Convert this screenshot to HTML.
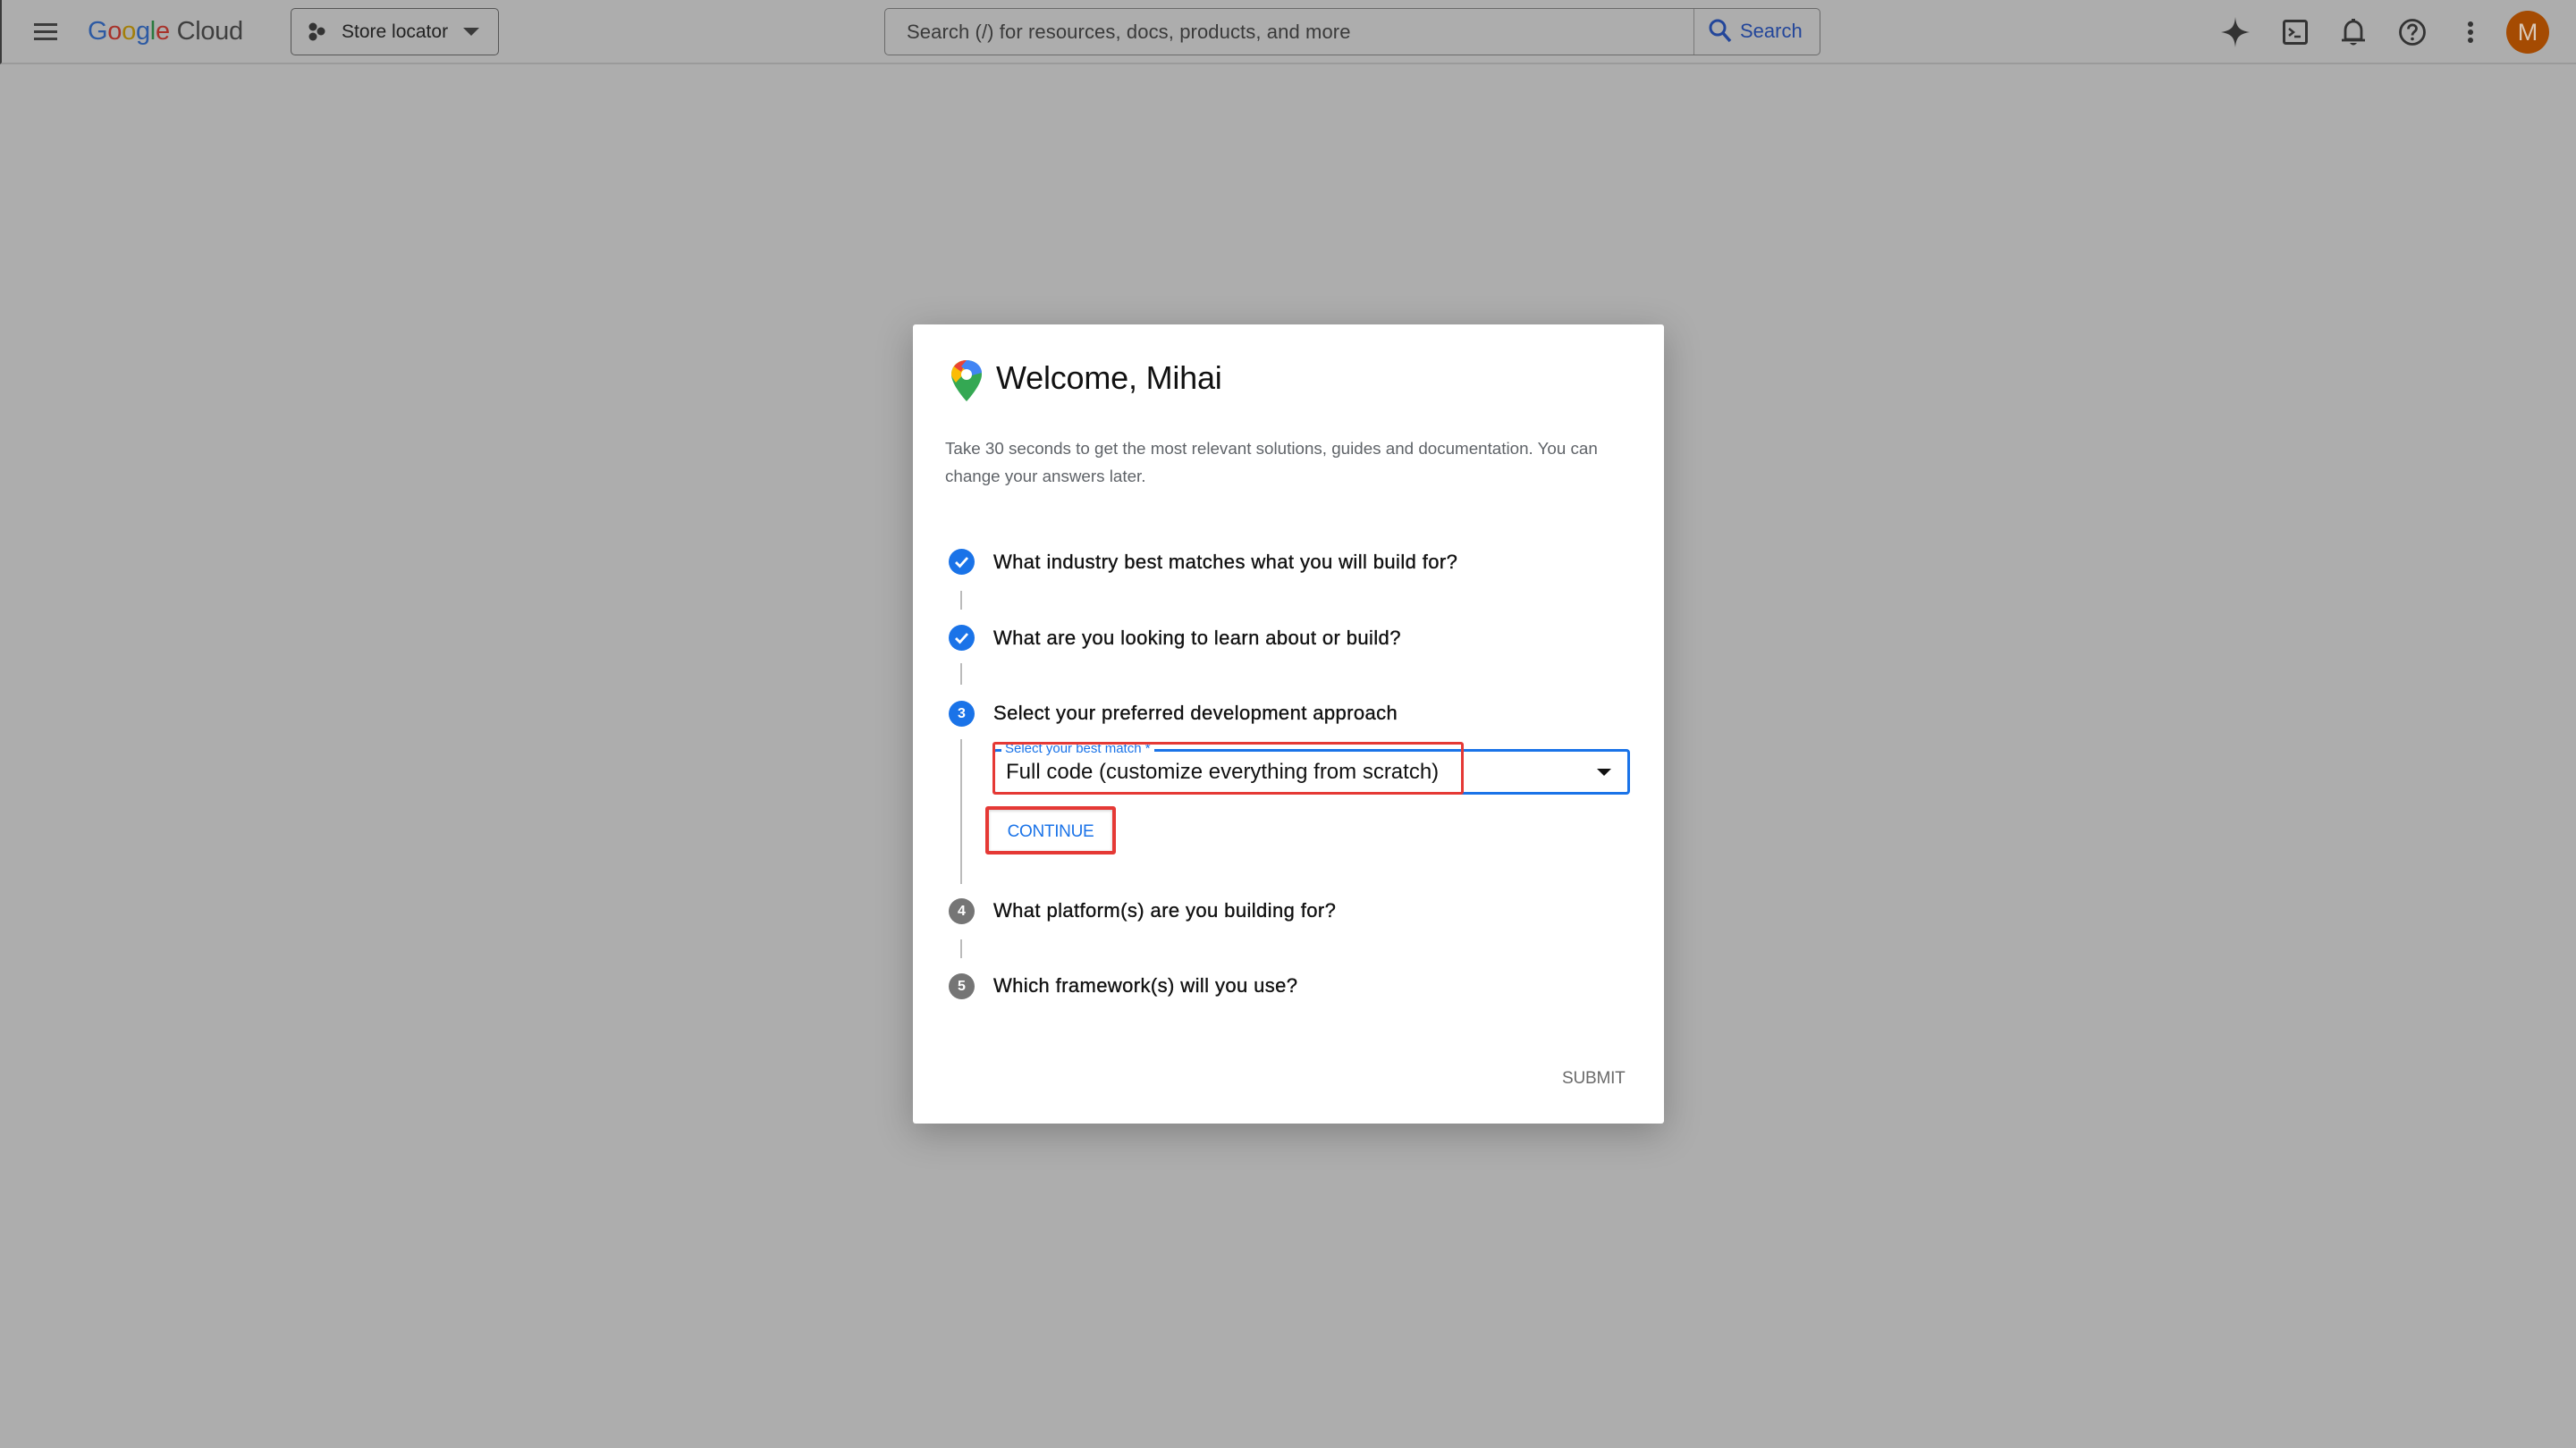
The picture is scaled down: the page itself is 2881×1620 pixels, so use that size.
<!DOCTYPE html>
<html><head><meta charset="utf-8"><style>
*{margin:0;padding:0;box-sizing:border-box}
body{width:2881px;height:1620px;background:#adadad;font-family:"Liberation Sans",sans-serif;position:relative;overflow:hidden}
.a{position:absolute;white-space:nowrap}
.hdr{position:absolute;left:0;top:0;width:2881px;height:72px;border-bottom:2px solid #9a9a9a;border-left:2px solid #3a3a3a}
.dlg{position:absolute;left:1021px;top:363px;width:840px;height:894px;background:#fff;border-radius:3px;box-shadow:0 10px 40px rgba(0,0,0,.25)}
.q{font-size:22px;color:#111;letter-spacing:0.4px;-webkit-text-stroke:0.35px #111}
.c{position:absolute;width:29px;height:29px;border-radius:50%;color:#fff;font-size:16px;font-weight:bold;text-align:center;line-height:29px}
.ln{position:absolute;left:1074px;width:2px;background:#bbb}
</style></head><body>
<div class="hdr"></div>
<div class="a" style="left:38px;top:26px;width:26px;height:3px;background:#3c3c3c"></div>
<div class="a" style="left:38px;top:34px;width:26px;height:3px;background:#3c3c3c"></div>
<div class="a" style="left:38px;top:42px;width:26px;height:3px;background:#3c3c3c"></div>
<div class="a" style="left:98px;top:19px;font-size:29px;letter-spacing:-0.3px"><span style="color:#2d5aa3">G</span><span style="color:#a8322a">o</span><span style="color:#a37f0a">o</span><span style="color:#2d5aa3">g</span><span style="color:#2a7a3e">l</span><span style="color:#a8322a">e</span> <span style="color:#3f3f3f">Cloud</span></div>
<div class="a" style="left:325px;top:9px;width:233px;height:53px;border:1.5px solid #555;border-radius:5px"></div>
<svg class="a" style="left:345px;top:24px" width="20" height="24" viewBox="0 0 20 24"><circle cx="5" cy="6" r="4.5" fill="#333"/><circle cx="14" cy="11" r="4.5" fill="#333"/><circle cx="5" cy="17" r="4.5" fill="#333"/></svg>
<div class="a" style="left:382px;top:24px;font-size:21px;color:#222">Store locator</div>
<div class="a" style="left:518px;top:31px;width:0;height:0;border-left:9px solid transparent;border-right:9px solid transparent;border-top:9px solid #3a3a3a"></div>
<div class="a" style="left:989px;top:9px;width:1047px;height:53px;border:1.5px solid #6a6a6a;border-radius:5px"></div>
<div class="a" style="left:1894px;top:10px;width:1px;height:51px;background:#7a7a7a"></div>
<div class="a" style="left:1014px;top:23px;font-size:22px;color:#3a3a3a;letter-spacing:0.1px">Search (/) for resources, docs, products, and more</div>
<svg class="a" style="left:1910px;top:20px" width="28" height="30" viewBox="0 0 28 30"><circle cx="11" cy="11" r="8" fill="none" stroke="#23469a" stroke-width="3"/><line x1="17" y1="17" x2="25" y2="26" stroke="#23469a" stroke-width="3.5"/></svg>
<div class="a" style="left:1946px;top:22px;font-size:22px;color:#23469a">Search</div>
<svg class="a" style="left:2482px;top:18px" width="36" height="36" viewBox="0 0 36 36"><path d="M18 1 C19 12 22 16 34 18 C22 20 19 24 18 35 C17 24 14 20 2 18 C14 16 17 12 18 1Z" fill="#333"/></svg>
<svg class="a" style="left:2553px;top:22px" width="28" height="28" viewBox="0 0 28 28"><rect x="1.5" y="1.5" width="25" height="25" rx="2" fill="none" stroke="#333" stroke-width="3"/><path d="M7 10 L12 14 L7 18" fill="none" stroke="#333" stroke-width="2.5"/><line x1="13" y1="19" x2="20" y2="19" stroke="#333" stroke-width="2.5"/></svg>
<svg class="a" style="left:2618px;top:20px" width="28" height="32" viewBox="0 0 28 32"><path d="M5 24 V14 C5 8 9 4 14 4 C19 4 23 8 23 14 V24 Z" fill="none" stroke="#333" stroke-width="2.8"/><line x1="1" y1="25" x2="27" y2="25" stroke="#333" stroke-width="2.8"/><rect x="12" y="1" width="4" height="4" fill="#333"/><path d="M10 28 Q14 33 18 28Z" fill="#333"/></svg>
<svg class="a" style="left:2682px;top:20px" width="32" height="32" viewBox="0 0 32 32"><circle cx="16" cy="16" r="13.5" fill="none" stroke="#333" stroke-width="2.8"/><path d="M11.5 12.5 C11.5 6.5 20.5 6.5 20.5 12 C20.5 15.5 16 15.5 16 19.5" fill="none" stroke="#333" stroke-width="2.8"/><circle cx="16" cy="23.5" r="1.8" fill="#333"/></svg>
<div class="a" style="left:2760px;top:24px;width:6px;height:6px;border-radius:50%;background:#333"></div>
<div class="a" style="left:2760px;top:33px;width:6px;height:6px;border-radius:50%;background:#333"></div>
<div class="a" style="left:2760px;top:42px;width:6px;height:6px;border-radius:50%;background:#333"></div>
<div class="a" style="left:2803px;top:12px;width:48px;height:48px;border-radius:50%;background:#a54b02;color:#d9c8b8;font-size:27px;text-align:center;line-height:48px">M</div>

<div class="dlg"></div>
<svg class="a" style="left:1063px;top:402px" width="36" height="48" viewBox="0 0 36 48"><path d="M18 1 C8 1 1 8 1 17 C1 29 18 47 18 47 C18 47 35 29 35 17 C35 8 28 1 18 1Z" fill="#34a853"/><path d="M1 17 C1 8 8 1 18 1 L26 4 L6 26 C3 22 1 19 1 17Z" fill="#fbbc04"/><path d="M4 8 C7 4 12 1 18 1 L12 14 Z" fill="#ea4335"/><path d="M18 1 C28 1 35 8 35 15 L24 18 L12 8Z" fill="#4285f4"/><circle cx="18" cy="17" r="6" fill="#fff"/></svg>
<div class="a" style="left:1114px;top:402px;font-size:36px;color:#111;letter-spacing:-0.2px">Welcome, Mihai</div>
<div class="a" style="left:1057px;top:486px;font-size:18.8px;line-height:31px;color:#5f6368;white-space:normal;width:775px;letter-spacing:0px">Take 30 seconds to get the most relevant solutions, guides and documentation. You can change your answers later.</div>

<div class="c" style="left:1061px;top:614px;background:#1a73e8"><svg width="29" height="29" viewBox="0 0 29 29"><path d="M8 15 L12.5 19.5 L21 10" fill="none" stroke="#fff" stroke-width="2.8"/></svg></div>
<div class="a q" style="left:1111px;top:616px">What industry best matches what you will build for?</div>
<div class="ln" style="top:661px;height:21px"></div>
<div class="c" style="left:1061px;top:699px;background:#1a73e8"><svg width="29" height="29" viewBox="0 0 29 29"><path d="M8 15 L12.5 19.5 L21 10" fill="none" stroke="#fff" stroke-width="2.8"/></svg></div>
<div class="a q" style="left:1111px;top:701px">What are you looking to learn about or build?</div>
<div class="ln" style="top:742px;height:24px"></div>
<div class="c" style="left:1061px;top:784px;background:#1a73e8">3</div>
<div class="a q" style="left:1111px;top:785px">Select your preferred development approach</div>
<div class="ln" style="top:827px;height:162px"></div>

<div class="a" style="left:1110px;top:838px;width:713px;height:51px;border:3px solid #1a73e8;border-radius:4px"></div>
<div class="a" style="left:1120px;top:829px;background:#fff;padding:0 4px;font-size:15px;color:#1a73e8;line-height:18px">Select your best match *</div>
<div class="a" style="left:1125px;top:850px;font-size:24px;color:#111;letter-spacing:0px">Full code (customize everything from scratch)</div>
<div class="a" style="left:1786px;top:860px;width:0;height:0;border-left:8px solid transparent;border-right:8px solid transparent;border-top:8px solid #111"></div>
<div class="a" style="left:1110px;top:830px;width:527px;height:59px;border:3px solid #e53935;border-radius:3px"></div>

<div class="a" style="left:1102px;top:902px;width:146px;height:54px;border:4px solid #e53935;border-radius:3px;box-shadow:0 1px 3px rgba(0,0,0,.2) inset"></div>
<div class="a" style="left:1102px;top:920px;width:146px;text-align:center;font-size:19px;color:#1a73e8;letter-spacing:-0.3px">CONTINUE</div>

<div class="c" style="left:1061px;top:1005px;background:#757575">4</div>
<div class="a q" style="left:1111px;top:1006px">What platform(s) are you building for?</div>
<div class="ln" style="top:1051px;height:21px"></div>
<div class="c" style="left:1061px;top:1089px;background:#757575">5</div>
<div class="a q" style="left:1111px;top:1090px">Which framework(s) will you use?</div>
<div class="a" style="left:1747px;top:1196px;font-size:19px;color:#6a6a6a;letter-spacing:-0.2px">SUBMIT</div>
</body></html>
